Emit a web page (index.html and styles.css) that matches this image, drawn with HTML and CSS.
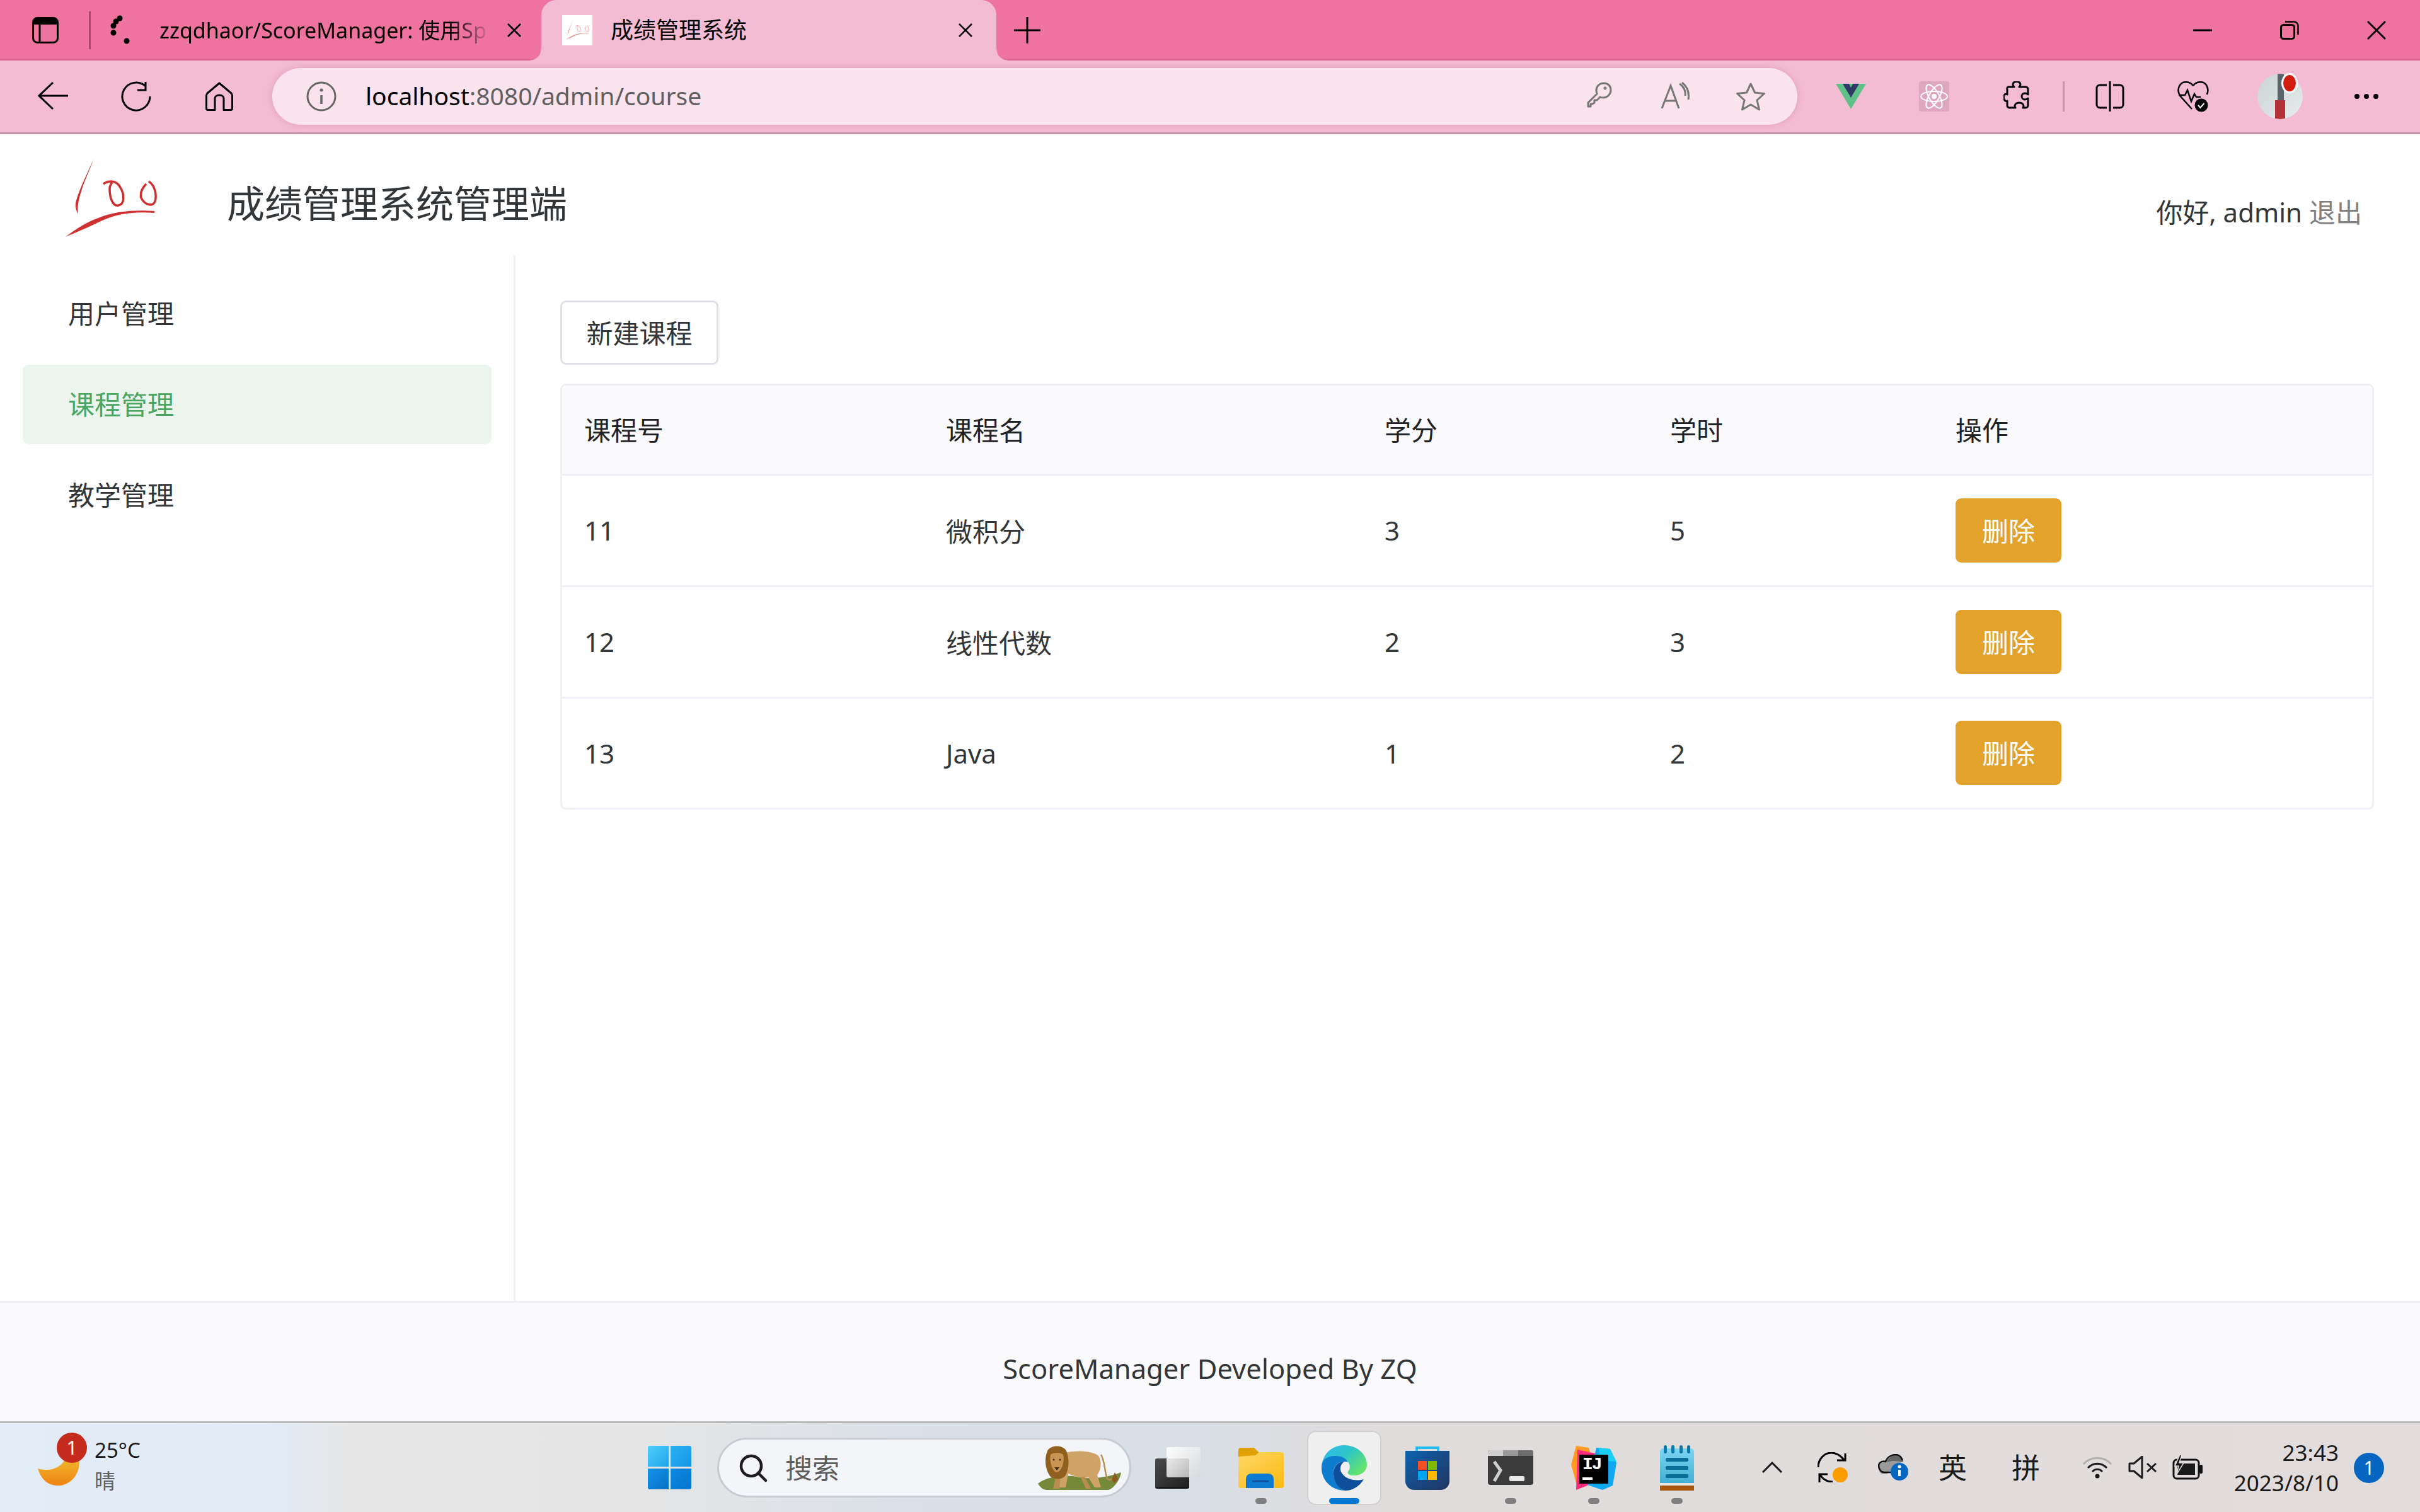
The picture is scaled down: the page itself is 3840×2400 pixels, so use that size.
FILE: index.html
```html
<!DOCTYPE html>
<html lang="zh-CN">
<head>
    <meta charset="UTF-8">
    <title>成绩管理系统</title>
    <link rel="stylesheet" href="styles.css">
</head>
<body>
    <svg class="defs" width="0" height="0">
      <defs>
        <symbol id="logo100" viewBox="0 0 150 125">
          <path d="M48 0C38 22 27 44 21 64C18 74 21 80 24 86C22 74 25 62 30 46C36 28 44 12 48 0Z" fill="#cf2f2f"/>
          <path d="M64 38C72 32 84 32 90 42C98 54 98 70 88 72C78 74 74 58 74 46C74 42 76 38 78 36" fill="none" stroke="#cf2f2f" stroke-width="3.500"/>
          <path d="M136 34C146 40 149 56 146 66C142 74 130 72 124 60C122 52 126 44 132 38" fill="none" stroke="#cf2f2f" stroke-width="3.500"/>
          <path d="M145 84C112 81 82 86 60 97C40 107 18 116 4 122C20 110 38 98 56 92C82 81 115 79 145 81Z" fill="#cf3030"/>
        </symbol>
      </defs>
    </svg>

    <div class="tabbar">
      <svg class="win-tabs" width="42" height="42" viewBox="0 0 42 42"><rect x="1.5" y="1.5" width="39" height="39" rx="7" fill="none" stroke="#000" stroke-width="3"/><path d="M3 3h36v9H3z" fill="#000"/><path d="M12 12v27" stroke="#000" stroke-width="3"/></svg>
      <div class="tab-sep"></div>
      <svg class="gh-icon" width="32" height="48" viewBox="0 0 32 48"><circle cx="15" cy="5" r="4.5"/><circle cx="9" cy="10" r="4.5"/><circle cx="5" cy="17" r="4.5"/><circle cx="5" cy="28" r="4.5"/><circle cx="26" cy="41" r="4.5"/></svg>
      <div class="tab-title tab-fade">zzqdhaor/ScoreManager: 使用Sp</div>
      <svg class="tab-close" width="24" height="24" viewBox="0 0 24 24"><path d="M2 2l20 20M22 2L2 22" stroke="#000" stroke-width="2.6"/></svg>
      <div class="tab-active">
        <svg class="favicon" width="48" height="48"><use href="#logo100" x="5" y="5" width="38" height="38" opacity=".55"/></svg>
        <div class="tab-title">成绩管理系统</div>
        <svg class="tab-close tab-close-end" width="24" height="24" viewBox="0 0 24 24"><path d="M2 2l20 20M22 2L2 22" stroke="#000" stroke-width="2.6"/></svg>
      </div>
      <svg class="new-tab" width="44" height="44" viewBox="0 0 44 44"><path d="M22 1v42M1 22h42" stroke="#000" stroke-width="3"/></svg>
      <div class="win-controls">
        <div class="win-btn"><svg width="30" height="30" viewBox="0 0 30 30"><path d="M0 15h30" stroke="#000" stroke-width="3"/></svg></div>
        <div class="win-btn"><svg width="30" height="30" viewBox="0 0 30 30"><rect x="1.5" y="6.5" width="21" height="22" rx="4" fill="none" stroke="#000" stroke-width="3"/><path d="M8 1.5h14a6.500 6.500 0 0 1 6.500 6.500v14" fill="none" stroke="#000" stroke-width="2.500"/></svg></div>
        <div class="win-btn"><svg width="30" height="30" viewBox="0 0 30 30"><path d="M1 1l28 28M29 1L1 29" stroke="#000" stroke-width="2.800"/></svg></div>
      </div>
    </div>

    <div class="toolbar">
      <div class="tb-btn tb-first"><svg width="48" height="48" viewBox="0 0 48 48" class="line"><path d="M24 2L2 23l22 21M2 23h46"/></svg></div>
      <div class="tb-btn"><svg width="48" height="48" viewBox="0 0 48 48" class="line"><path d="M46 24a22 22 0 1 1-7-16M39 1v13H26"/></svg></div>
      <div class="tb-btn"><svg width="44" height="46" viewBox="0 0 44 46" class="line"><path d="M22 2L3 18c-1 1-1.500 2-1.500 4v20c0 1.500 1 2.500 2.500 2.500h11V26c0-3 3-5 7-5s7 2 7 5v18.500h11c1.500 0 2.500-1 2.500-2.500V22c0-2-.500-3-1.500-4z" stroke-linejoin="round"/></svg></div>

      <div class="address">
        <svg class="addr-info" width="48" height="48" viewBox="0 0 48 48"><circle cx="24" cy="24" r="22" fill="none" stroke="#676767" stroke-width="3"/><path d="M24 22v14" stroke="#676767" stroke-width="3.500"/><circle cx="24" cy="14" r="2.500" fill="#676767"/></svg>
        <div class="url"><span class="url-host">localhost</span>:8080/admin/course</div>
        <div class="addr-icons">
          <div class="addr-btn"><svg width="40" height="42" viewBox="0 0 40 42" class="line grey"><path d="M27 2c7 0 11 5 11 11s-5 12-12 12c-2 0-4 0-5-1L16 29h-4v4l-3 2H6v4H2v-6l14-14c-1-2-1-4-1-6C15 7 20 2 27 2zM29 9a1 1 0 1 1-.100 0z" stroke-linejoin="round"/></svg></div>
          <div class="addr-btn"><svg width="46" height="44" viewBox="0 0 46 44" class="line grey"><path d="M2 42L16 6l13 36M7 30h18M30 3c7 4 10 12 9 19M34 1c8 6 12 14 10 27" /></svg></div>
          <div class="addr-btn"><svg width="48" height="46" viewBox="0 0 48 46" class="line grey"><path d="M24 3l6.500 14 15 1.500L34 29l3.500 15L24 36l-13.500 8L14 29 2.500 18.500l15-1.500z" stroke-linejoin="round"/></svg></div>
        </div>
      </div>

      <div class="tb-btn tb-ext-first"><svg width="48" height="40" viewBox="0 0 48 40"><path d="M0 0h48L24 40z" fill="#5fc188"/><path d="M11 0h10l3 6 3-6h10L24 22z" fill="#2f3b66"/></svg></div>
      <div class="tb-btn"><div class="react-box"><svg width="44" height="44" viewBox="0 0 44 44" fill="none" stroke="#fff" stroke-width="2"><ellipse cx="22" cy="22" rx="21" ry="8"/><ellipse cx="22" cy="22" rx="21" ry="8" transform="rotate(60 22 22)"/><ellipse cx="22" cy="22" rx="21" ry="8" transform="rotate(120 22 22)"/><circle cx="22" cy="22" r="4" fill="#fff" stroke="none"/></svg></div></div>
      <div class="tb-btn"><svg width="44" height="48" viewBox="0 0 44 48" class="line"><path d="M7 9h10c-1-1-2-2-2-4a6 4.500 0 0 1 12 0c0 2-1 3-2 4h10a4 4 0 0 1 4 3v9c-2-2-3-2-5-2a5 5 0 0 0 0 10c2 0 3 0 5-2v12a4 4 0 0 1-4 3H31c1-2 1-2 1-3a7 5 0 0 0-14 0c0 1 0 1 1 3H9a4 4 0 0 1-3-4V31c-2 1-3 1-4-1a5 6 0 0 1 0-9c1-1 2-1 4 0v-8a4 4 0 0 1 1-4z" stroke-linejoin="round"/></svg></div>
      <div class="tb-sep"></div>
      <div class="tb-btn"><svg width="46" height="48" viewBox="0 0 46 48" class="line"><path d="M18 6H7a5 5 0 0 0-5 5v26a5 5 0 0 0 5 5h11M28 6h11a5 5 0 0 1 5 5v26a5 5 0 0 1-5 5H28M23 0v48"/></svg></div>
      <div class="tb-btn"><svg width="50" height="52" viewBox="0 0 50 52"><path d="M25 9C20 2 9 1 4 8c-4 6-3 12 1 18l18 20" fill="none" stroke="#000" stroke-width="2.500"/><path d="M25 9c5-7 16-8 21-1 3 5 3 10 1 15" fill="none" stroke="#000" stroke-width="2.500"/><path d="M2 24h10l4-8 6 18 5-12 3 5h7" fill="none" stroke="#000" stroke-width="2.500"/><circle cx="38" cy="40" r="10.500" fill="#000"/><path d="M33 40l3.500 4 6-7" fill="none" stroke="#fff" stroke-width="2"/></svg></div>
      <div class="tb-btn tb-avatar">
        <div class="avatar"><div class="avatar-post"></div><div class="avatar-red"></div></div>
        <div class="avatar-dot"></div>
      </div>
      <div class="tb-btn tb-more"><svg width="40" height="10" viewBox="0 0 40 10"><circle cx="5" cy="5" r="4"/><circle cx="20" cy="5" r="4"/><circle cx="35" cy="5" r="4"/></svg></div>
    </div>

    <header class="app-header">
      <svg class="app-logo" width="150" height="125"><use href="#logo100"/></svg>
      <h1 class="app-title">成绩管理系统管理端</h1>
      <div class="app-user">你好, admin <a class="logout">退出</a></div>
    </header>

    <div class="app-body">
      <nav class="sidebar">
        <div class="menu-item">用户管理</div>
        <div class="menu-item active">课程管理</div>
        <div class="menu-item">教学管理</div>
      </nav>
      <main class="main">
        <button class="btn-plain">新建课程</button>
        <div class="table-wrap">
          <table class="course-table">
            <colgroup>
              <col class="col-1"><col class="col-2"><col class="col-3"><col class="col-4"><col>
            </colgroup>
            <thead>
              <tr><th>课程号</th><th>课程名</th><th>学分</th><th>学时</th><th>操作</th></tr>
            </thead>
            <tbody>
              <tr><td>11</td><td>微积分</td><td>3</td><td>5</td><td><button class="btn-warn">删除</button></td></tr>
              <tr><td>12</td><td>线性代数</td><td>2</td><td>3</td><td><button class="btn-warn">删除</button></td></tr>
              <tr><td>13</td><td>Java</td><td>1</td><td>2</td><td><button class="btn-warn">删除</button></td></tr>
            </tbody>
          </table>
        </div>
      </main>
    </div>

    <footer class="app-footer">ScoreManager Developed By ZQ</footer>

    <div class="taskbar">
      <div class="weather">
        <svg class="moon" width="66" height="40" viewBox="0 0 66 40"><defs><linearGradient id="moonG" x1="0" y1="0" x2="0" y2="1"><stop offset="0" stop-color="#efb52a"/><stop offset="1" stop-color="#ef8313"/></linearGradient></defs><path d="M42 0h24c1 22-14 40-34 40C16 40 5 30 0 13c20 6 36-2 42-13z" fill="url(#moonG)"/></svg>
        <div class="badge-red">1</div>
        <div class="weather-text">
          <div class="temp">25°C</div>
          <div class="cond">晴</div>
        </div>
      </div>

      <div class="start-logo">
        <div class="pane pane-a"></div><div class="pane pane-b"></div><div class="pane pane-c"></div><div class="pane pane-d"></div>
      </div>

      <div class="search">
        <svg width="46" height="46" viewBox="0 0 46 46" fill="none" stroke="#1c1c1c" stroke-width="4.500"><circle cx="20" cy="20" r="16"/><path d="M31 31l12 12" stroke-linecap="round"/></svg>
        <span class="search-text">搜索</span>
        <svg class="lion" width="132" height="74" viewBox="0 0 132 74">
          <path d="M0 62C12 52 40 46 66 52c24 4 50-2 66-8-2 12-10 24-20 28H14C8 72 4 68 0 62z" fill="#76883a"/>
          <path d="M100 16c6 8 6 30 10 38 3 3 8 2 12-2" fill="none" stroke="#b98d50" stroke-width="2.500"/>
          <path d="M122 44l-5 12 4 5 6-6z" fill="#8d5b22"/>
          <path d="M40 14C58 8 88 10 96 18c6 10 4 22-2 30l6 20H90L80 52C70 54 56 50 48 46L44 68H34L24 48z" fill="#cfa265"/>
          <path d="M28 50h8l-2 20h-10zM74 50l10 20h-8l-8-18z" fill="#b98d50"/>
          <path d="M15 10C20 0 40 0 45 10c5 12 5 28-2 40-6 6-18 6-24 0C11 38 10 22 15 10z" fill="#8f5f1e"/>
          <path d="M20 16c4-4 16-4 20 0 2 8 0 20-6 26-3 2-6 2-8 0-5-6-8-18-6-26z" fill="#c99552"/>
          <path d="M26 36h8l-4 5z" fill="#3f2a10"/>
          <circle cx="25" cy="24" r="1.500" fill="#3f2a10"/><circle cx="35" cy="24" r="1.500" fill="#3f2a10"/>
        </svg>
      </div>

      <div class="task-row">
        <div class="task-btn"><div class="taskview"><div class="tv-back"></div><div class="tv-front"></div></div></div>
        <div class="task-btn running">
          <svg width="72" height="64" viewBox="0 0 72 64"><defs><linearGradient id="fold" x1="0" y1="0" x2="1" y2="1"><stop offset="0" stop-color="#ffd86a"/><stop offset="1" stop-color="#fbb90f"/></linearGradient></defs><path d="M0 4a4 4 0 0 1 4-4h21l8 8v6H0z" fill="#e0a100"/><path d="M0 14l27-2 6-5h35a4 4 0 0 1 4 4v49a4 4 0 0 1-4 4H4a4 4 0 0 1-4-4z" fill="url(#fold)"/><path d="M12 64V50c0-6 4-9 9-9h26c5 0 9 3 9 9v14z" fill="#0c7ad0"/><path d="M22 53h26" stroke="#0a4f9a" stroke-width="2.500"/></svg>
        </div>
        <div class="task-btn current">
          <svg width="72" height="72" viewBox="0 0 72 72"><defs><linearGradient id="edgeG" x1="0" y1="0" x2="1" y2=".7"><stop offset="0" stop-color="#34b6f7"/><stop offset=".5" stop-color="#2cc6c8"/><stop offset="1" stop-color="#68e36a"/></linearGradient></defs><path d="M0 34C2 12 18 0 36 0c20 0 36 14 36 31 0 11-10 17-20 17-7 0-12-2-10-6 2-3 4-6 2-12-4-10-16-13-26-12C8 19 2 26 0 34z" fill="url(#edgeG)"/><path d="M0 36c0-14 10-19 22-19 12 0 18 5 20 10-8-3-22 1-23 15-1 14 11 30 19 30C16 72 0 56 0 36z" fill="#0f7dcf"/><path d="M38 72C26 70 19 56 19 44c0-12 9-18 17-18-6 4-8 12-4 18 6 10 22 14 35 10-7 12-19 18-29 18z" fill="#0e4f9c"/></svg>
          <div class="current-bar"></div>
        </div>
        <div class="task-btn">
          <svg width="70" height="70" viewBox="0 0 70 70"><defs><linearGradient id="storeG" x1="0" y1="0" x2="1" y2="1"><stop offset="0" stop-color="#0b62ae"/><stop offset="1" stop-color="#22345f"/></linearGradient></defs><path d="M18 12V3h34v9" fill="none" stroke="#23bdf1" stroke-width="4"/><path d="M0 8h70v48a14 14 0 0 1-14 14H14A14 14 0 0 1 0 56z" fill="url(#storeG)"/><rect x="20" y="24" width="14" height="14" fill="#f25022"/><rect x="36" y="24" width="14" height="14" fill="#7fba00"/><rect x="20" y="40" width="14" height="14" fill="#00a4ef"/><rect x="36" y="40" width="14" height="14" fill="#ffb900"/></svg>
        </div>
        <div class="task-btn running">
          <svg width="72" height="55" viewBox="0 0 72 55"><rect width="72" height="55" rx="4" fill="#3b3b3b"/><path d="M0 4a4 4 0 0 1 4-4h20v9H0z" fill="#cfcfcf"/><path d="M24 0h24v9H24z" fill="#9a9a9a"/><path d="M48 0h20a4 4 0 0 1 4 4v5H48z" fill="#6c6c6c"/><path d="M10 18l10 14-10 17" fill="none" stroke="#cfcfcf" stroke-width="5"/><rect x="34" y="41" width="24" height="8" rx="2" fill="#e8e8e8"/></svg>
        </div>
        <div class="task-btn running">
          <div class="idea">
            <svg width="72" height="70" viewBox="0 0 72 70"><path d="M8 0l20 3 6 20-20 24-6 12L0 30z" fill="#ff9a1f"/><path d="M10 6l28 6-10 50-20 8z" fill="#fc2a78"/><path d="M40 3l22 2 10 22-6 36-16 7-24-8z" fill="#10a8ee"/><path d="M44 3l18 2 10 20-26-2z" fill="#18d0f5"/><rect x="13" y="14" width="46" height="46" fill="#000"/><rect x="18" y="50" width="16" height="4" fill="#fff"/></svg>
            <span class="idea-text">IJ</span>
          </div>
        </div>
        <div class="task-btn running">
          <svg width="54" height="72" viewBox="0 0 54 72"><defs><linearGradient id="noteG" x1="0" y1="0" x2="0" y2="1"><stop offset="0" stop-color="#7ed4f3"/><stop offset="1" stop-color="#42b0d2"/></linearGradient></defs><path d="M0 10a5 5 0 0 1 5-5h44a5 5 0 0 1 5 5v50H0z" fill="url(#noteG)"/><path d="M0 60h54v4H0z" fill="#e8e4df"/><path d="M0 64h54v8H0z" fill="#a9560e"/><g fill="#0b78a5"><rect x="6" y="0" width="5" height="13" rx="2.500"/><rect x="18" y="0" width="5" height="13" rx="2.500"/><rect x="31" y="0" width="5" height="13" rx="2.500"/><rect x="43" y="0" width="5" height="13" rx="2.500"/></g><g fill="#0b6e99"><rect x="9" y="20" width="36" height="6" rx="2"/><rect x="9" y="33" width="36" height="6" rx="2"/><rect x="9" y="46" width="36" height="6" rx="2"/></g></svg>
        </div>
      </div>

      <div class="tray">
        <svg class="tray-chevron" width="32" height="18" viewBox="0 0 32 18"><path d="M1 17L16 2l15 15" fill="none" stroke="#1a1a1a" stroke-width="3"/></svg>
        <svg class="tray-sync" width="48" height="48" viewBox="0 0 48 48" fill="none" stroke="#000" stroke-width="3"><path d="M1 24C1 12 10 1 22 1c8 0 14 4 20 11M44 2v11H31"/><path d="M3 48V35h13M4 36c5 8 12 11 20 11"/><circle cx="36" cy="36" r="12" fill="#fb9d00" stroke="none"/></svg>
        <svg class="tray-cloud" width="48" height="42" viewBox="0 0 48 42"><path d="M10 32C2 32 0 24 2 19c2-5 6-7 10-6C15 5 22 1 28 2c5 0 9 4 11 9L14 32z" fill="#9a9a9a"/><path d="M14 13c3-8 10-11 15-11 6 0 10 5 11 11-8-2-18-3-26 0z" fill="#666"/><path d="M31 29H10C2 29-1 18 3 14c2-2 5-3 9-2C15 4 22 1 28 1c5 0 9 4 11 9" fill="none" stroke="#111" stroke-width="2.500"/><circle cx="34" cy="28" r="14" fill="#0566bf"/><path d="M34 25v10" stroke="#fff" stroke-width="4"/><circle cx="34" cy="20" r="2.500" fill="#fff"/></svg>
        <span class="tray-ime ime-en">英</span>
        <span class="tray-ime ime-py">拼</span>
        <svg class="tray-wifi" width="48" height="36" viewBox="0 0 48 36" fill="none" stroke-width="3"><path d="M2 13C14 0 34 0 46 13" stroke="#b5b0b0"/><path d="M9 19c9-9 21-9 30 0" stroke="#1a1a1a"/><path d="M16 25c5-5 11-5 16 0" stroke="#1a1a1a"/><circle cx="24" cy="32" r="3.500" fill="#1a1a1a" stroke="none"/></svg>
        <svg class="tray-vol" width="46" height="36" viewBox="0 0 46 36" fill="none" stroke="#1a1a1a" stroke-width="3"><path d="M2 12v12h7l13 11V1L9 12z" stroke-linejoin="round"/><path d="M30 12l14 13M44 12L30 25"/></svg>
        <svg class="tray-bat" width="48" height="40" viewBox="0 0 48 40"><rect x="2" y="8" width="40" height="30" rx="5" fill="none" stroke="#111" stroke-width="3"/><rect x="8" y="14" width="28" height="18" fill="#1a1a1a"/><rect x="43" y="16" width="5" height="14" rx="2" fill="#111"/><path d="M12 0L4 18h6l-3 13 11-18h-7l4-13z" fill="#111" stroke="#e0dbdb" stroke-width="1.500"/></svg>
        <div class="clock">
          <div>23:43</div>
          <div>2023/8/10</div>
        </div>
        <div class="badge-blue">1</div>
      </div>
    </div>
</body>
</html>
```

FILE: styles.css
```css
html, body {
    margin: 0;
    padding: 0;
}
body {
    width: 3840px;
    height: 2400px;
    display: flex;
    flex-direction: column;
    overflow: hidden;
    background: #fff;
    color: #333639;
    font-family: "Noto Sans", "Noto Sans CJK SC", sans-serif;
    font-size: 42px;
}
.defs {
    position: absolute;
}
svg {
    display: block;
    flex: none;
}
.line {
    fill: none;
    stroke: #000;
    stroke-width: 3;
}
.grey {
    stroke: #767676;
}

/* browser tab strip */
.tabbar {
    height: 96px;
    flex: none;
    display: flex;
    align-items: center;
    background: #ee739f;
    box-shadow: inset 0 -3px 3px -2px rgba(120, 20, 60, .35);
    color: #000;
}
.win-tabs {
    margin-left: 51px;
}
.tab-sep {
    width: 3px;
    height: 60px;
    margin-left: 48px;
    background: #a94a70;
}
.gh-icon {
    margin-left: 31px;
}
.tab-title {
    font-size: 36px;
    line-height: 48px;
    white-space: nowrap;
}
.tab-fade {
    width: 525px;
    margin-left: 46px;
    font-size: 34px;
    -webkit-mask-image: linear-gradient(to right, #000 88%, transparent 100%);
    mask-image: linear-gradient(to right, #000 88%, transparent 100%);
}
.tab-close {
    margin-left: 26px;
}
.tab-active {
    position: relative;
    align-self: stretch;
    width: 722px;
    margin-left: 31px;
    box-sizing: border-box;
    padding: 0 37px 0 33px;
    display: flex;
    align-items: center;
    background: #f4bcd3;
    border-radius: 24px 24px 0 0;
}
.tab-active::before,
.tab-active::after {
    content: "";
    position: absolute;
    bottom: 0;
    width: 18px;
    height: 18px;
}
.tab-active::before {
    left: -18px;
    background: radial-gradient(circle at 0 0, transparent 17px, #f4bcd3 18px);
}
.tab-active::after {
    right: -18px;
    background: radial-gradient(circle at 100% 0, transparent 17px, #f4bcd3 18px);
}
.favicon {
    background: #fff;
}
.tab-active .tab-title {
    margin-left: 29px;
}
.tab-close-end {
    margin-left: auto;
}
.new-tab {
    margin-left: 27px;
}
.win-controls {
    margin-left: auto;
    display: flex;
}
.win-btn {
    width: 138px;
    display: flex;
    justify-content: center;
}

/* browser toolbar */
.toolbar {
    height: 114px;
    flex: none;
    display: flex;
    align-items: center;
    background: #f4bcd3;
    border-bottom: 3px solid #c095aa;
}
.tb-btn {
    width: 132px;
    flex: none;
    display: flex;
    justify-content: center;
    align-items: center;
    position: relative;
}
.tb-first {
    margin-left: 18px;
}
.address {
    width: 2420px;
    height: 90px;
    margin-left: 18px;
    box-sizing: border-box;
    padding: 0 14px 0 54px;
    display: flex;
    align-items: center;
    background: #fae3ec;
    border-radius: 45px;
    box-shadow: 0 0 12px rgba(170, 80, 120, .28);
}
.url {
    margin-left: 46px;
    font-size: 39px;
    line-height: 48px;
    padding-bottom: 3px;
    color: #5f5f63;
    white-space: nowrap;
}
.url-host {
    color: #000;
}
.addr-icons {
    margin-left: auto;
    display: flex;
}
.addr-btn {
    width: 120px;
    display: flex;
    justify-content: center;
}
.tb-ext-first {
    margin-left: 19px;
}
.react-box {
    width: 48px;
    height: 48px;
    display: flex;
    align-items: center;
    justify-content: center;
    background: #dfa6bd;
    border-radius: 4px;
}
.tb-sep {
    width: 3px;
    height: 48px;
    margin: 0 6px;
    background: #c095aa;
}
.tb-avatar {
    margin-left: 6px;
}
.avatar {
    width: 72px;
    height: 72px;
    border-radius: 50%;
    overflow: hidden;
    position: relative;
    background: linear-gradient(135deg, #c9d3d2, #e8ecec);
}
.avatar-post {
    position: absolute;
    left: 32px;
    top: 0;
    width: 10px;
    height: 50px;
    background: #5a646b;
}
.avatar-red {
    position: absolute;
    left: 28px;
    top: 42px;
    width: 16px;
    height: 30px;
    background: #b23237;
}
.avatar-dot {
    position: absolute;
    right: 38px;
    top: 0;
    width: 20px;
    height: 26px;
    border: 3px solid #fff;
    border-radius: 50%;
    background: #d11c10;
    box-sizing: content-box;
    transform: translate(0, -1px);
}
.tb-more {
    margin-left: 5px;
}

/* app */
.app-header {
    height: 192px;
    flex: none;
    display: flex;
    align-items: flex-start;
}
.app-logo {
    margin: 41px 0 0 100px;
}
.app-title {
    margin: 68px 0 0 110px;
    font-size: 60px;
    line-height: 84px;
    font-weight: 400;
}
.app-user {
    margin: 94px 92px 0 auto;
    font-size: 42px;
    line-height: 60px;
}
.logout {
    color: #808080;
}
.app-body {
    flex: 1;
    display: flex;
    min-height: 0;
}
.sidebar {
    width: 818px;
    flex: none;
    box-sizing: border-box;
    border-right: 3px solid #efeff5;
    padding: 30px 35px 0 36px;
    display: flex;
    flex-direction: column;
    gap: 18px;
}
.menu-item {
    height: 126px;
    line-height: 126px;
    padding-left: 72px;
    border-radius: 9px;
}
.menu-item.active {
    background: #ebf5ee;
    color: #4aa561;
}
.main {
    flex: 1;
    padding: 72px 73px 0 71px;
    min-width: 0;
}
button {
    font-family: inherit;
}
.btn-plain {
    display: block;
    width: 251px;
    height: 102px;
    padding: 0 0 3px;
    font-size: 42px;
    color: #333639;
    background: #fff;
    border: 3px solid #e0e0e6;
    border-radius: 9px;
}
.table-wrap {
    margin-top: 30px;
    border: 3px solid #efeff5;
    border-radius: 9px;
    overflow: hidden;
}
.course-table {
    width: 100%;
    table-layout: fixed;
    border-collapse: collapse;
}
.col-1 {
    width: 574px;
}
.col-2 {
    width: 696px;
}
.col-3,
.col-4 {
    width: 453px;
}
.course-table th {
    height: 141px;
    box-sizing: border-box;
    padding: 0 35px 3px;
    text-align: left;
    font-weight: 400;
    color: #1f2225;
    background: #fafafc;
    border-bottom: 3px solid #efeff5;
}
.course-table td {
    height: 177px;
    box-sizing: border-box;
    padding: 0 35px;
    border-bottom: 3px solid #efeff5;
}
.course-table tr:last-child td {
    height: 175px;
    border-bottom: none;
}
.btn-warn {
    display: block;
    width: 168px;
    height: 102px;
    padding: 0 0 3px;
    font-size: 42px;
    color: #fff;
    background: #e3a22c;
    border: none;
    border-radius: 9px;
}
.app-footer {
    height: 191px;
    flex: none;
    box-sizing: border-box;
    padding-top: 20px;
    display: flex;
    align-items: center;
    justify-content: center;
    font-size: 43.500px;
    background: #fafafc;
    border-top: 3px solid #efeff5;
}

/* windows taskbar */
.taskbar {
    height: 144px;
    flex: none;
    box-sizing: border-box;
    display: flex;
    align-items: center;
    position: relative;
    border-top: 3px solid #b8b8b8;
    color: #1a1a1a;
    background: linear-gradient(to right, #e2ecf6 0, #e1eaf5 430px, #e6e6e6 560px, #e5e5e5 1000px, #d9e0e8 1500px, #d9dfe6 1900px, #e1dcdc 2200px, #e2dcdc 3840px);
}
.weather {
    width: 1028px;
    flex: none;
    align-self: stretch;
    position: relative;
    display: flex;
    padding-left: 150px;
    box-sizing: border-box;
}
.moon {
    position: absolute;
    left: 60px;
    top: 59px;
}
.badge-red,
.badge-blue {
    position: absolute;
    width: 48px;
    height: 48px;
    border-radius: 50%;
    color: #fff;
    font-size: 30px;
    line-height: 48px;
    text-align: center;
}
.badge-red {
    left: 90px;
    top: 15px;
    background: #c42b1c;
}
.weather-text {
    font-size: 33px;
    line-height: 49px;
    padding-top: 18px;
}
.cond {
    color: #5d6268;
}
.start-logo {
    width: 69px;
    height: 69px;
    flex: none;
    display: grid;
    grid-template-columns: 1fr 1fr;
    gap: 3px;
}
.pane-a {
    background: linear-gradient(135deg, #4fd0fb, #1fa3ea);
    border-radius: 3px 0 0 0;
}
.pane-b {
    background: linear-gradient(135deg, #2bb0f0, #1596e6);
    border-radius: 0 3px 0 0;
}
.pane-c {
    background: linear-gradient(135deg, #1594e8, #0570c8);
    border-radius: 0 0 0 3px;
}
.pane-d {
    background: linear-gradient(135deg, #0f88e0, #0376d0);
    border-radius: 0 0 3px 0;
}
.search {
    width: 657px;
    height: 95px;
    flex: none;
    margin-left: 41px;
    box-sizing: border-box;
    padding-left: 31px;
    display: flex;
    align-items: center;
    background: #f3f5f8;
    border: 3px solid #c8ccd2;
    border-radius: 48px;
}
.search-text {
    margin-left: 28px;
    padding-bottom: 3px;
    color: #5c5c5c;
    font-size: 43px;
}
.lion {
    margin-left: auto;
    margin-right: 13px;
}
.task-row {
    display: flex;
    margin-left: 8px;
}
.task-btn {
    width: 132px;
    height: 114px;
    flex: none;
    display: flex;
    align-items: center;
    justify-content: center;
    position: relative;
}
.task-btn.running::after {
    content: "";
    position: absolute;
    bottom: 0;
    left: 57px;
    width: 18px;
    height: 9px;
    border-radius: 5px;
    background: #7f7f7f;
}
.task-btn.current {
    width: 114px;
    margin: 0 9px;
    border-radius: 12px;
    background: #f0eff0;
    box-shadow: 0 0 0 2px #d2cfd0;
}
.current-bar {
    position: absolute;
    bottom: 0;
    left: 33px;
    width: 48px;
    height: 9px;
    border-radius: 5px;
    background: #0078d4;
}
.taskview {
    width: 72px;
    height: 66px;
    position: relative;
}
.tv-back {
    position: absolute;
    left: 0;
    bottom: 0;
    width: 54px;
    height: 48px;
    border-radius: 3px;
    background: linear-gradient(135deg, #4b4b4b, #1d1d1d);
    border-bottom: 2px solid #0b0b0b;
    box-sizing: border-box;
}
.tv-front {
    position: absolute;
    right: 0;
    top: 0;
    width: 54px;
    height: 48px;
    border-radius: 3px;
    background: linear-gradient(135deg, rgba(255, 255, 255, .95), rgba(215, 215, 215, .75));
}
.idea {
    position: relative;
    width: 72px;
    height: 70px;
}
.idea-text {
    position: absolute;
    left: 18px;
    top: 12px;
    font-family: "Liberation Mono", monospace;
    font-size: 28px;
    font-weight: 700;
    line-height: 36px;
    letter-spacing: -2px;
    color: #fff;
}
.tray {
    flex: 1;
    display: flex;
    align-items: center;
    margin-left: 3px;
    position: relative;
    align-self: stretch;
}
.tray svg {
    margin-top: -2px;
}
.tray-chevron {
    margin-left: 66px;
}
.tray-sync {
    margin-left: 56px;
}
.tray-cloud {
    margin-left: 48px;
}
.tray-ime {
    font-size: 45px;
    line-height: 60px;
    width: 45px;
    flex: none;
}
.ime-en {
    margin-left: 48px;
}
.ime-py {
    margin-left: 71px;
}
.tray-wifi {
    margin-left: 67px;
}
.tray-vol {
    margin-left: 25px;
}
.tray-bat {
    margin-left: 24px;
}
.clock {
    margin-left: 46px;
    width: 170px;
    font-size: 35px;
    line-height: 48px;
    text-align: right;
    white-space: nowrap;
}
.badge-blue {
    position: static;
    margin-left: 24px;
    background: #0565c0;
    flex: none;
}
```
